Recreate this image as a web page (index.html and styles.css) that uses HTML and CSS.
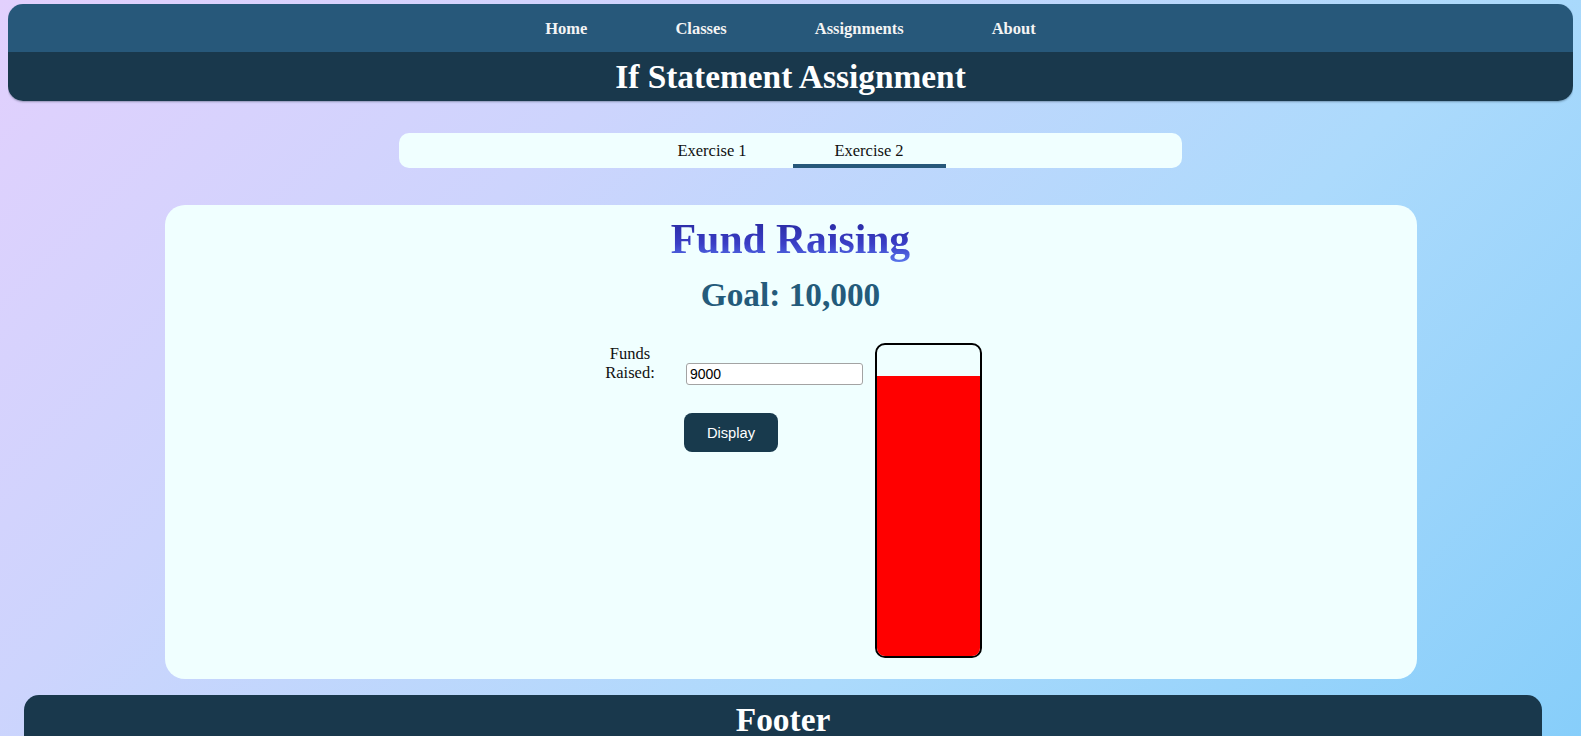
FILE: index.html
```html
<!DOCTYPE html>
<html lang="en">
<head>
<meta charset="utf-8">
<title>If Statement Assignment</title>
<link rel="stylesheet" href="styles.css">
</head>
<body>
<header class="site-header">
  <nav class="nav">
    <a class="nav-link" href="#">Home</a>
    <a class="nav-link" href="#">Classes</a>
    <a class="nav-link" href="#">Assignments</a>
    <a class="nav-link" href="#">About</a>
  </nav>
  <div class="title-bar">
    <h1 class="page-title">If Statement Assignment</h1>
  </div>
</header>
<main class="content">
  <div class="tabs">
    <a class="tab" href="#">Exercise 1</a>
    <a class="tab tab-active" href="#">Exercise 2</a>
  </div>
  <section class="card">
    <h1 class="card-title">Fund Raising</h1>
    <h2 class="goal">Goal: 10,000</h2>
    <div class="fund-row">
      <div class="fund-form">
        <div class="field">
          <label class="field-label" for="funds">Funds Raised:</label>
          <input class="field-input" id="funds" type="text" value="9000">
        </div>
        <button class="display-btn" type="button">Display</button>
      </div>
      <div class="thermo">
        <div class="thermo-fill" style="height: 90%"></div>
      </div>
    </div>
  </section>
</main>
<footer class="site-footer">
  <h2 class="footer-title">Footer</h2>
</footer>
</body>
</html>
```

FILE: styles.css
```css
html {
  min-height: 100%;
  background: linear-gradient(135deg, #e2d0fd 0%, #cdd4fd 30%, #acdafc 65%, #87cefa 100%) fixed;
}

body {
  margin: 4px 8px 0;
  font-family: "Liberation Serif", "Times New Roman", serif;
  font-size: 16.5px;
  color: #111;
}

.site-header {
  border-radius: 15px;
  overflow: hidden;
  box-shadow: 0 1px 2px rgba(10, 30, 45, 0.35);
}

.nav {
  height: 48px;
  background: #27587a;
  display: flex;
  justify-content: center;
  align-items: center;
  gap: 88px;
  padding-top: 1px;
  box-sizing: border-box;
}

.nav-link {
  color: #f4f4f4;
  font-weight: bold;
  font-size: 16.5px;
  text-decoration: none;
}

.title-bar {
  height: 49px;
  background: #19384c;
  display: flex;
  justify-content: center;
  align-items: center;
}

.page-title {
  margin: 0;
  color: #fff;
  font-size: 33.4px;
  line-height: 38px;
}

.content {
  display: block;
}

.tabs {
  width: 50%;
  margin: 32px auto 37px;
  background: #f0ffff;
  border-radius: 10px;
  display: flex;
  justify-content: center;
  gap: 4px;
}

.tab {
  width: 153px;
  text-align: center;
  padding: 9px 0 4px;
  line-height: 18px;
  border-bottom: 4px solid transparent;
  color: #111;
  text-decoration: none;
}

.tab-active {
  border-bottom-color: #27587a;
}

.card {
  width: 80%;
  margin: 0 auto 16px;
  background: #f0ffff;
  border-radius: 20px;
  padding: 10px 0 21px;
  box-sizing: border-box;
  text-align: center;
}

.card-title {
  margin: 0;
  font-size: 41.6px;
  line-height: 48px;
  background: linear-gradient(180deg, #26269a 0%, #3a3ec6 60%, #5a78ec 100%);
  -webkit-background-clip: text;
  background-clip: text;
  color: transparent;
  display: inline-block;
}

.goal {
  margin: 13px 0 0;
  font-size: 33.3px;
  line-height: 38px;
  color: #245b7b;
}

.fund-row {
  margin-top: 29px;
  display: flex;
  justify-content: center;
  align-items: flex-start;
  gap: 12px;
}

.fund-form {
  display: flex;
  flex-direction: column;
  align-items: flex-start;
}

.field {
  display: flex;
  align-items: flex-end;
  gap: 25px;
}

.field-label {
  width: 62px;
  text-align: center;
  line-height: 19px;
  padding: 1px 0 3px;
}

.field-input {
  width: 177px;
  height: 22px;
  box-sizing: border-box;
  border: 1px solid #a3a3a3;
  border-radius: 3px;
  padding: 1px 3px;
  font-family: "Liberation Sans", Arial, sans-serif;
  font-size: 14px;
  color: #000;
  background: #fff;
}

.display-btn {
  margin: 28px 0 0 85px;
  width: 94px;
  height: 39px;
  border: none;
  border-radius: 8px;
  background: #183a4d;
  color: #fff;
  font-family: "Liberation Sans", Arial, sans-serif;
  font-size: 14.7px;
}

.thermo {
  width: 107px;
  height: 315px;
  box-sizing: border-box;
  border: 2px solid #000;
  border-radius: 10px;
  overflow: hidden;
  display: flex;
  flex-direction: column;
  justify-content: flex-end;
  background: #f0ffff;
}

.thermo-fill {
  background: #ff0000;
}

.site-footer {
  width: 97%;
  margin-left: 16px;
  height: 49px;
  background: #19384c;
  border-radius: 15px 15px 0 0;
  display: flex;
  justify-content: center;
  align-items: center;
}

.footer-title {
  margin: 0;
  color: #fff;
  font-size: 33.4px;
  line-height: 38px;
}
```
